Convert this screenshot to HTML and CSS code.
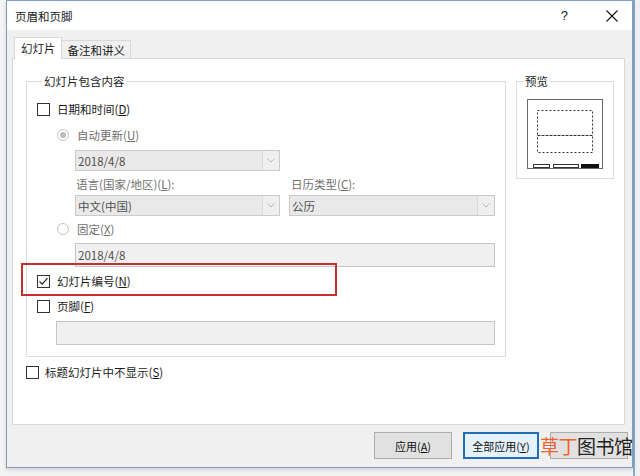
FILE: index.html
```html
<!DOCTYPE html>
<html lang="zh-CN">
<head>
  <meta charset="UTF-8" />
  <title>页眉和页脚</title>
  <link rel="stylesheet" href="styles.css">
</head>
<body>
  <div class="screen">
    <div class="dialog">
      <div class="titlebar">
        <span class="title">页眉和页脚</span>
        <span class="help">?</span>
        <svg class="close" width="12" height="12" viewBox="0 0 12 12">
          <path d="M0.5 0.5 L11.5 11.5 M11.5 0.5 L0.5 11.5" stroke="#111" stroke-width="1.1" fill="none"/>
        </svg>
      </div>

      <div class="tabs">
        <div class="tab active">幻灯片</div>
        <div class="tab">备注和讲义</div>
      </div>

      <div class="panel">
        <div class="panel-top">
          <fieldset class="group">
            <legend>幻灯片包含内容</legend>

            <div class="row r-date">
              <span class="box"></span>
              <span>日期和时间(<u>D</u>)</span>
            </div>

            <div class="row indent1 r-auto disabled">
              <span class="radio on"></span>
              <span>自动更新(<u>U</u>)</span>
            </div>

            <div class="select indent2 w-half r-sel1">
              <span class="value">2018/4/8</span>
              <span class="arrow"><svg width="8" height="5" viewBox="0 0 8 5"><path d="M0.5 0.5 L4 4 L7.5 0.5" stroke="#b8b8b8" fill="none"/></svg></span>
            </div>

            <div class="grid2 indent2 r-labels disabled">
              <span class="lbl">语言(国家/地区)(<u>L</u>):</span>
              <span class="lbl lbl2">日历类型(<u>C</u>):</span>
            </div>

            <div class="grid2 indent2 r-sel2">
              <div class="select">
                <span class="value">中文(中国)</span>
                <span class="arrow"><svg width="8" height="5" viewBox="0 0 8 5"><path d="M0.5 0.5 L4 4 L7.5 0.5" stroke="#b8b8b8" fill="none"/></svg></span>
              </div>
              <div class="select">
                <span class="value">公历</span>
                <span class="arrow"><svg width="8" height="5" viewBox="0 0 8 5"><path d="M0.5 0.5 L4 4 L7.5 0.5" stroke="#b8b8b8" fill="none"/></svg></span>
              </div>
            </div>

            <div class="row indent1 r-fixed disabled">
              <span class="radio"></span>
              <span>固定(<u>X</u>)</span>
            </div>

            <div class="field indent2 w-full r-fixin">2018/4/8</div>

            <div class="row r-num">
              <span class="box checked">
                <svg width="11" height="11" viewBox="0 0 11 11"><path d="M1.5 5.5 L4.2 8.2 L9.5 2.2" stroke="#222" stroke-width="1.2" fill="none"/></svg>
              </span>
              <span>幻灯片编号(<u>N</u>)</span>
            </div>

            <div class="row r-foot">
              <span class="box"></span>
              <span>页脚(<u>F</u>)</span>
            </div>

            <div class="field indent-foot r-footin"></div>
          </fieldset>

          <fieldset class="preview">
            <legend>预览</legend>
            <svg class="page" width="76" height="70" viewBox="0 0 76 70">
              <rect x="0.5" y="0.5" width="75" height="69" fill="#fff" stroke="#6a6a6a"/>
              <rect x="10.5" y="11.5" width="55" height="25" fill="none" stroke="#333" stroke-dasharray="2 2"/>
              <rect x="10.5" y="36.5" width="55" height="17" fill="none" stroke="#333" stroke-dasharray="2 2"/>
              <rect x="6.5" y="65.5" width="16" height="3" fill="#fff" stroke="#333"/>
              <rect x="26.5" y="65.5" width="25" height="3" fill="#fff" stroke="#333"/>
              <rect x="54" y="65" width="18" height="4" fill="#111"/>
            </svg>
          </fieldset>
        </div>

        <div class="row r-title">
          <span class="box"></span>
          <span>标题幻灯片中不显示(<u>S</u>)</span>
        </div>
      </div>

      <div class="footer">
        <button class="btn">应用(<u>A</u>)</button>
        <button class="btn default">全部应用(<u>Y</u>)</button>
        <button class="btn"></button>
      </div>
    </div>

    <div class="highlight"></div>
    <div class="watermark"><span class="wm-a">草丁</span><span class="wm-b">图书馆</span></div>
  </div>
</body>
</html>
```

FILE: styles.css
```css
* {
  box-sizing: border-box;
}

body {
  margin: 0;
  background: #ededed;
  font-family: "Noto Sans CJK SC", "Liberation Sans", sans-serif;
  font-size: 11.5px;
  color: #1a1a1a;
}

u {
  text-decoration: underline;
  text-underline-offset: 1px;
}

.screen {
  position: relative;
  width: 640px;
  height: 476px;
  overflow: hidden;
  background: linear-gradient(to right, #f4f4f4 0, #f4f4f4 633px, #8ea9c9 633px, #8ea9c9 635px, #eef1f4 635px);
}

.dialog {
  margin-left: 6px;
  width: 627px;
  height: 468px;
  border: 1px solid #7f9fc2;
  background: #f0f0f0;
  box-shadow: 0 2px 4px rgba(0, 0, 0, 0.15);
}

/* title bar */
.titlebar {
  height: 29px;
  background: #fff;
  display: flex;
  align-items: center;
  padding-left: 8px;
  line-height: 16px;
}

.title {
  flex: 1;
  font-size: 11.5px;
}

.help {
  font-family: "Liberation Sans", sans-serif;
  font-size: 13px;
  margin-right: 38px;
}

.close {
  margin-right: 14px;
}

/* tabs */
.tabs {
  display: flex;
  align-items: flex-end;
  margin: 7px 0 0 7px;
  height: 21px;
  line-height: 16px;
}

.tab {
  height: 18px;
  padding: 0 5px 0 6px;
  border: 1px solid #d9d9d9;
  border-left: none;
  border-bottom: none;
  background: #f0f0f0;
  display: flex;
  align-items: center;
}

.tab.active {
  height: 22px;
  margin-bottom: -1px;
  border-left: 1px solid #d9d9d9;
  background: #fff;
  position: relative;
  z-index: 1;
  padding-bottom: 2px;
}

/* panel */
.panel {
  margin-left: 5px;
  width: 613px;
  height: 367px;
  background: #fff;
  border: 1px solid #d9d9d9;
  padding: 14px 0 0 13px;
}

.panel-top {
  display: flex;
  gap: 10px;
}

fieldset {
  margin: 0;
  border: 1px solid #dcdcdc;
  line-height: 16px;
}

legend {
  padding: 0 2px;
  line-height: 16px;
}

.group {
  width: 480px;
  height: 284px;
  padding: 0 10px 9px 10px;
}

.group legend {
  margin-left: 5px;
}

.preview {
  width: 98px;
  height: 106px;
  padding: 0 0 0 10px;
}

.preview legend {
  margin-left: -4px;
}

.page {
  display: block;
  margin-top: 10px;
}

/* rows */
.row {
  display: flex;
  align-items: center;
  height: 20px;
  gap: 7px;
}

.disabled {
  color: #6f6f6f;
}

.indent1 {
  padding-left: 20px;
  gap: 8px;
}

.indent2 {
  margin-left: 38px;
}

.indent-foot {
  margin-left: 19px;
}

.box {
  width: 13px;
  height: 13px;
  border: 1px solid #333;
  background: #fff;
  display: flex;
  align-items: center;
  justify-content: center;
  flex: none;
}

.radio {
  width: 12px;
  height: 12px;
  border-radius: 50%;
  border: 1px solid #c4c4c4;
  background: #fff;
  display: flex;
  align-items: center;
  justify-content: center;
  flex: none;
}

.radio.on::after {
  content: "";
  width: 6px;
  height: 6px;
  border-radius: 50%;
  background: #bdbdbd;
}

.select {
  height: 21px;
  border: 1px solid #cacaca;
  background: #e9e9e9;
  display: flex;
  align-items: center;
  color: #505050;
  line-height: 16px;
}

.select .value {
  flex: 1;
  padding-left: 2px;
}

.select .arrow {
  width: 17px;
  height: 100%;
  border-left: 1px solid #dadada;
  background: #efefef;
  display: flex;
  align-items: center;
  justify-content: center;
}

.w-half {
  width: 205px;
}

.grid2 {
  display: grid;
  grid-template-columns: 205px 206px;
  column-gap: 9px;
  line-height: 16px;
}

.lbl {
  padding-left: 1px;
}

.lbl2 {
  padding-left: 2px;
}

.field {
  height: 24px;
  border: 1px solid #c6c6c6;
  background: #f0f0f0;
  color: #505050;
  padding-left: 2px;
  line-height: 22px;
}

.w-full {
  width: 420px;
}

.r-date { margin-top: 10px; }
.r-auto { margin-top: 6px; }
.r-sel1 { margin-top: 5px; }
.r-labels { margin-top: 5px; }
.r-sel2 { margin-top: 3px; }
.r-fixed { margin-top: 3px; }
.r-fixin { margin-top: 4px; }
.r-num { margin-top: 4px; }
.r-foot { margin-top: 5px; }
.r-footin { margin-top: 5px; width: 439px; }

.r-title {
  margin-top: 5px;
  gap: 6px;
}

/* footer */
.footer {
  display: flex;
  justify-content: flex-end;
  gap: 11px;
  margin-top: 7px;
  padding-right: 4px;
}

.btn {
  width: 78px;
  height: 27px;
  border: 1px solid #adadad;
  background: #e1e1e1;
  font-family: inherit;
  font-size: 11px;
  color: #111;
  padding: 0;
}

.btn.default {
  width: 76px;
  border: 2px solid #1f6fb8;
  background: #e5f1fb;
}

/* overlays */
.highlight {
  position: absolute;
  left: 21px;
  top: 263px;
  width: 316px;
  height: 33px;
  border: 2px solid #c62f31;
}

.watermark {
  position: absolute;
  left: 540px;
  top: 433px;
  font-size: 19px;
  line-height: 26px;
  letter-spacing: -0.5px;
}

.wm-a {
  color: #f0622e;
}

.wm-b {
  color: #222;
}
```
